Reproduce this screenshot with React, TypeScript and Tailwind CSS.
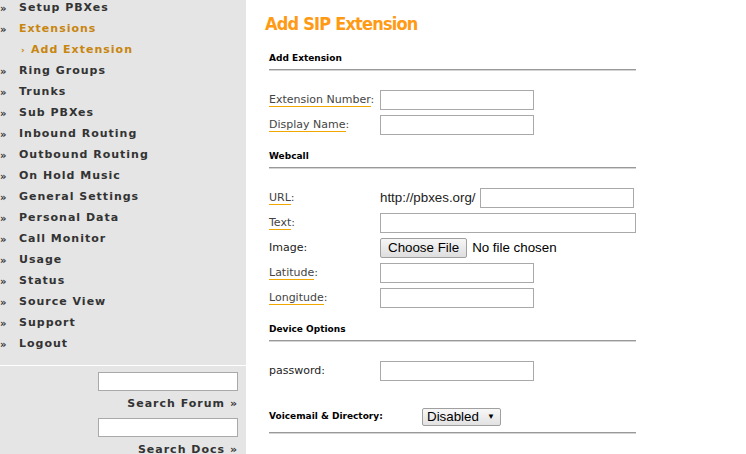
import React from "react"

const navItems = [
  "Setup PBXes",
  "Extensions",
  "Add Extension",
  "Ring Groups",
  "Trunks",
  "Sub PBXes",
  "Inbound Routing",
  "Outbound Routing",
  "On Hold Music",
  "General Settings",
  "Personal Data",
  "Call Monitor",
  "Usage",
  "Status",
  "Source View",
  "Support",
  "Logout",
]

function NavItem({ label }: { label: string }) {
  if (label === "Add Extension") {
    return (
      <li className="flex h-[21px] items-center pl-[21px] text-[#c8850f]">
        <span className="w-[10px] text-[9px]">›</span>
        <span>{label}</span>
      </li>
    )
  }
  const active = label === "Extensions"
  return (
    <li className={`flex h-[21px] items-center ${active ? "text-[#c8850f]" : "text-[#333]"}`}>
      <span className="w-[19px] text-[10px] text-[#333]">»</span>
      <span>{label}</span>
    </li>
  )
}

function Label({ text, plain }: { text: string; plain?: boolean }) {
  return (
    <div className="w-[111px] shrink-0 font-['DejaVu_Sans',sans-serif] text-[11px] text-[#444]">
      {plain ? (
        <span className="text-[#222]">{text}:</span>
      ) : (
        <>
          <span className="border-b border-[#f0a800]">{text}</span>:
        </>
      )}
    </div>
  )
}

function TextBox({ w = "w-[154px]" }: { w?: string }) {
  return <input type="text" className={`h-[20px] ${w} border border-[#a9a9a9] bg-white`} />
}

function Rule() {
  return (
    <div className="w-[367px]">
      <div className="h-[1px] bg-[#999]" />
      <div className="h-[1px] bg-[#d4d4d4]" />
    </div>
  )
}

function Section({ title }: { title: string }) {
  return (
    <div className="pt-[15px]">
      <div className="text-[9px] font-bold leading-[12px] text-black">{title}</div>
      <div className="mt-[5px]">
        <Rule />
      </div>
    </div>
  )
}

export default function App() {
  return (
    <div className="flex h-[454px] w-[746px] overflow-hidden bg-white font-['DejaVu_Sans',sans-serif]">
      <aside className="flex w-[246px] shrink-0 flex-col bg-[#e5e5e5]">
        <ul className="-mt-[2px] shrink-0 text-[11px] font-bold tracking-[1px]">
          {navItems.map((n) => (
            <NavItem key={n} label={n} />
          ))}
        </ul>
        <div className="mt-[10px] h-[1px] shrink-0 bg-white" />
        <div className="flex shrink-0 flex-col items-end pr-[8px] pt-[6px] text-[11px] font-bold tracking-[1px] text-[#333]">
          <input type="text" className="h-[19px] w-[140px] border border-[#a9a9a9] bg-white" />
          <div className="mt-[5px] leading-[15px]">Search Forum »</div>
          <input type="text" className="mt-[7px] h-[19px] w-[140px] border border-[#a9a9a9] bg-white" />
          <div className="mt-[5px] leading-[15px]">Search Docs »</div>
        </div>
      </aside>

      <main className="flex-1 pl-[19px]">
        <h1 className="pb-[3px] pt-[14px] font-['DejaVu_Sans',sans-serif] text-[18px] font-bold leading-[20px] font-stretch-condensed tracking-[-0.8px] text-[#ff9a14]">
          Add SIP Extension
        </h1>
        <div className="pl-[4px]">
          <Section title="Add Extension" />
          <div className="mt-[19px] flex flex-col gap-[5px]">
            <div className="flex items-center">
              <Label text="Extension Number" />
              <TextBox />
            </div>
            <div className="flex items-center">
              <Label text="Display Name" />
              <TextBox />
            </div>
          </div>

          <Section title="Webcall" />
          <div className="mt-[19px] flex flex-col gap-[5px] font-['Liberation_Sans',sans-serif] text-[13.33px]">
            <div className="flex items-center">
              <Label text="URL" />
              <span className="text-[#222]">http://pbxes.org/</span>
              <span className="ml-[4px] flex">
                <TextBox />
              </span>
            </div>
            <div className="flex items-center">
              <Label text="Text" />
              <TextBox w="w-[256px]" />
            </div>
            <div className="flex items-center">
              <Label text="Image" plain />
              <button className="h-[20px] rounded-[2px] border border-[#a0a0a0] bg-gradient-to-b from-[#f6f6f6] to-[#dedede] px-[7px] leading-[18px] text-black">
                Choose File
              </button>
              <span className="ml-[5px] text-black">No file chosen</span>
            </div>
            <div className="flex items-center">
              <Label text="Latitude" />
              <TextBox />
            </div>
            <div className="flex items-center">
              <Label text="Longitude" />
              <TextBox />
            </div>
          </div>

          <Section title="Device Options" />
          <div className="mt-[19px] flex items-center">
            <Label text="password" plain />
            <TextBox />
          </div>

          <div className="mt-[27px] flex items-center">
            <div className="w-[153px] text-[9px] font-bold text-black">Voicemail &amp; Directory:</div>
            <div className="flex h-[18px] items-center gap-[8px] rounded-[2px] border border-[#a0a0a0] bg-gradient-to-b from-[#f8f8f8] to-[#e2e2e2] pl-[4px] pr-[5px] font-['Liberation_Sans',sans-serif] text-[13.33px] text-black">
              <span>Disabled</span>
              <span className="text-[8px]">▼</span>
            </div>
          </div>
          <div className="mt-[6px]">
            <Rule />
          </div>
        </div>
      </main>
    </div>
  )
}
